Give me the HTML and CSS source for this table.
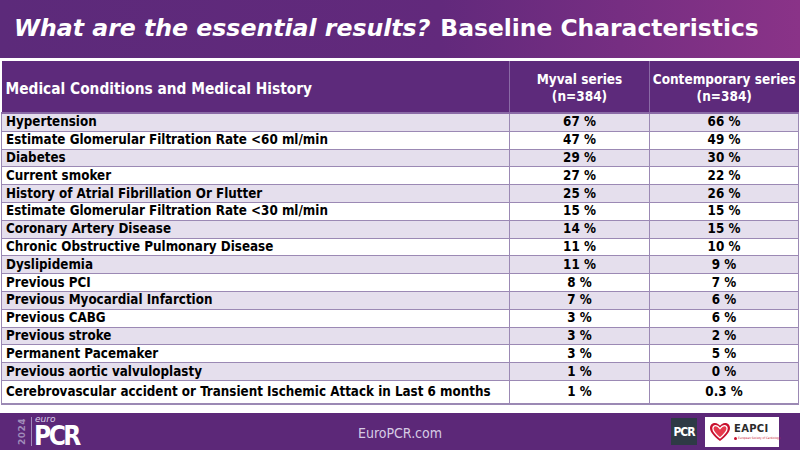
FILE: index.html
```html
<!DOCTYPE html>
<html>
<head>
<meta charset="utf-8">
<link rel="stylesheet" href="styles.css">
</head>
<body>
<div class="slide">
  <header class="title">
    <span class="q">What are the essential results?</span>
    <span class="t">Baseline Characteristics</span>
  </header>
  <table class="data">
    <thead>
      <tr>
        <th class="c1">Medical Conditions and Medical History</th>
        <th class="c2">Myval series<br>(n=384)</th>
        <th class="c3">Contemporary series<br>(n=384)</th>
      </tr>
    </thead>
    <tbody>
      <tr><td>Hypertension</td><td>67 %</td><td>66 %</td></tr>
      <tr><td>Estimate Glomerular Filtration Rate &lt;60 ml/min</td><td>47 %</td><td>49 %</td></tr>
      <tr><td>Diabetes</td><td>29 %</td><td>30 %</td></tr>
      <tr><td>Current smoker</td><td>27 %</td><td>22 %</td></tr>
      <tr><td>History of Atrial Fibrillation Or Flutter</td><td>25 %</td><td>26 %</td></tr>
      <tr><td>Estimate Glomerular Filtration Rate &lt;30 ml/min</td><td>15 %</td><td>15 %</td></tr>
      <tr><td>Coronary Artery Disease</td><td>14 %</td><td>15 %</td></tr>
      <tr><td>Chronic Obstructive Pulmonary Disease</td><td>11 %</td><td>10 %</td></tr>
      <tr><td>Dyslipidemia</td><td>11 %</td><td>9 %</td></tr>
      <tr><td>Previous PCI</td><td>8 %</td><td>7 %</td></tr>
      <tr><td>Previous Myocardial Infarction</td><td>7 %</td><td>6 %</td></tr>
      <tr><td>Previous CABG</td><td>3 %</td><td>6 %</td></tr>
      <tr><td>Previous stroke</td><td>3 %</td><td>2 %</td></tr>
      <tr><td>Permanent Pacemaker</td><td>3 %</td><td>5 %</td></tr>
      <tr><td>Previous aortic valvuloplasty</td><td>1 %</td><td>0 %</td></tr>
      <tr class="last"><td>Cerebrovascular accident or Transient Ischemic Attack in Last 6 months</td><td>1 %</td><td>0.3 %</td></tr>
    </tbody>
  </table>
  <footer class="foot">
    <div class="logo">
      <span class="year">2024</span>
      <span class="bar"></span>
      <span class="brand"><span class="euro">euro</span><span class="pcr">PCR</span></span>
    </div>
    <div class="site">EuroPCR.com</div>
    <div class="partners">
      <div class="pcrbox">PCR</div>
      <div class="eapci">
        <svg class="heart" viewBox="0 0 24 22" width="22" height="20">
          <path d="M12 21 C5 15 1 11 1 6.5 C1 3 3.6 1 6.5 1 C9 1 10.8 2.5 12 4.2 C13.2 2.5 15 1 17.5 1 C20.4 1 23 3 23 6.5 C23 11 19 15 12 21 Z" fill="#c8102e"/>
          <path d="M12 17.5 C7 13.5 4.2 10.5 4.2 7.2 C4.2 5.3 5.6 4 7.3 4 C9 4 10.6 5.4 12 7.3 C13.4 5.4 15 4 16.7 4 C18.4 4 19.8 5.3 19.8 7.2 C19.8 10.5 17 13.5 12 17.5 Z" fill="#e63a4c" stroke="#fff" stroke-width="1.4"/>
        </svg>
        <div class="etext">
          <span class="ename">EAPCI</span>
          <span class="esub"><i></i>European Society of Cardiology</span>
        </div>
      </div>
    </div>
  </footer>
</div>
</body>
</html>
```
FILE: styles.css
```css
html, body {
  margin: 0;
  padding: 0;
  background: #ffffff;
}
.slide {
  width: 800px;
  height: 450px;
  overflow: hidden;
  display: flex;
  flex-direction: column;
  font-family: "DejaVu Sans Condensed", "DejaVu Sans", sans-serif;
}
.title {
  height: 58px;
  flex: none;
  display: flex;
  align-items: center;
  gap: 10px;
  padding-left: 14px;
  padding-bottom: 2px;
  box-sizing: border-box;
  color: #ffffff;
  white-space: nowrap;
  background: linear-gradient(90deg, #5c2a7a 0%, #62297c 55%, #8a3388 100%);
  margin-bottom: 3px;
}
.title .q {
  font-family: "DejaVu Sans", sans-serif;
  font-weight: bold;
  font-style: italic;
  font-size: 23.6px;
}
.title .t {
  font-family: "DejaVu Sans", sans-serif;
  font-weight: bold;
  font-size: 23.4px;
}
.data {
  width: 798px;
  margin-left: 1px;
  border-collapse: collapse;
  table-layout: fixed;
  font-weight: bold;
  font-size: 13.3px;
  color: #000000;
}
.data th {
  height: 52px;
  padding: 3px 0 0 0;
  box-sizing: border-box;
  vertical-align: middle;
  background: #5d2a7b;
  color: #ffffff;
  font-size: 13.5px;
  line-height: 17px;
  border-left: 1px solid #8a6aa6;
  border-bottom: 2px solid #8a6aa6;
}
.data th.c1 {
  width: 508px;
  text-align: left;
  padding-left: 4px;
  padding-top: 5px;
  font-size: 15.3px;
  border-left: none;
}
.data th.c2 { width: 140px; }
.data th.c3 { width: auto; }
.data td {
  height: 16.8px;
  padding: 0;
  line-height: 16px;
  text-align: center;
  border: 1px solid #9b89b4;
}
.data td:first-child {
  text-align: left;
  padding-left: 4px;
  border-left: 1px solid #9b89b4;
}
.data tbody tr:nth-child(odd) td { background: #e5dfed; }
.data tbody tr:nth-child(even) td { background: #ffffff; }
.data tr.last td {
  height: 22px;
  border-bottom: 2px solid #9b89b4;
}
.foot {
  margin-top: auto;
  height: 37px;
  flex: none;
  background: #5c2878;
  display: flex;
  align-items: center;
  position: relative;
}
.logo {
  display: flex;
  align-items: center;
  margin-left: 18px;
  height: 37px;
}
.year {
  writing-mode: vertical-rl;
  transform: rotate(180deg);
  font-size: 9px;
  font-weight: bold;
  color: #a08cba;
  letter-spacing: 0.5px;
  line-height: 9px;
  font-family: "DejaVu Sans", sans-serif;
}
.bar {
  width: 1px;
  height: 29px;
  background: #a08cba;
  margin-left: 4px;
  margin-right: 2px;
}
.brand {
  display: flex;
  flex-direction: column;
  color: #ffffff;
}
.euro {
  font-family: "DejaVu Sans", sans-serif;
  font-style: italic;
  font-size: 9px;
  color: #d9cde6;
  line-height: 8px;
  margin-left: 1px;
}
.pcr {
  font-family: "DejaVu Sans Condensed", sans-serif;
  font-weight: bold;
  font-size: 26px;
  letter-spacing: -2.5px;
  line-height: 26px;
}
.site {
  position: absolute;
  left: 0;
  right: 0;
  top: 0;
  height: 37px;
  display: flex;
  align-items: center;
  justify-content: center;
  font-family: "DejaVu Sans Condensed", "DejaVu Sans", sans-serif;
  font-size: 14px;
  color: #d6cbe4;
  padding-top: 2px;
  box-sizing: border-box;
  pointer-events: none;
}
.partners {
  margin-left: auto;
  margin-right: 21px;
  display: flex;
  align-items: center;
  gap: 8px;
  position: relative;
}
.pcrbox {
  width: 26px;
  height: 27px;
  background: #2e3a45;
  color: #ffffff;
  font-weight: bold;
  font-size: 12px;
  letter-spacing: -1px;
  display: flex;
  align-items: center;
  justify-content: center;
  font-family: "DejaVu Sans Condensed", sans-serif;
}
.eapci {
  width: 74px;
  height: 30px;
  background: #ffffff;
  display: flex;
  align-items: center;
  gap: 3px;
  padding-left: 4px;
  box-sizing: border-box;
}
.heart { flex: none; }
.etext {
  display: flex;
  flex-direction: column;
  line-height: 1;
}
.ename {
  font-family: "DejaVu Sans", sans-serif;
  font-weight: bold;
  font-size: 10px;
  color: #2b2b2b;
  letter-spacing: 0.3px;
}
.esub {
  font-size: 3px;
  color: #c8102e;
  margin-top: 3px;
  white-space: nowrap;
  display: flex;
  align-items: center;
  gap: 1px;
}
.esub i {
  display: inline-block;
  width: 3px;
  height: 3px;
  border-radius: 50%;
  background: #c8102e;
}
```
